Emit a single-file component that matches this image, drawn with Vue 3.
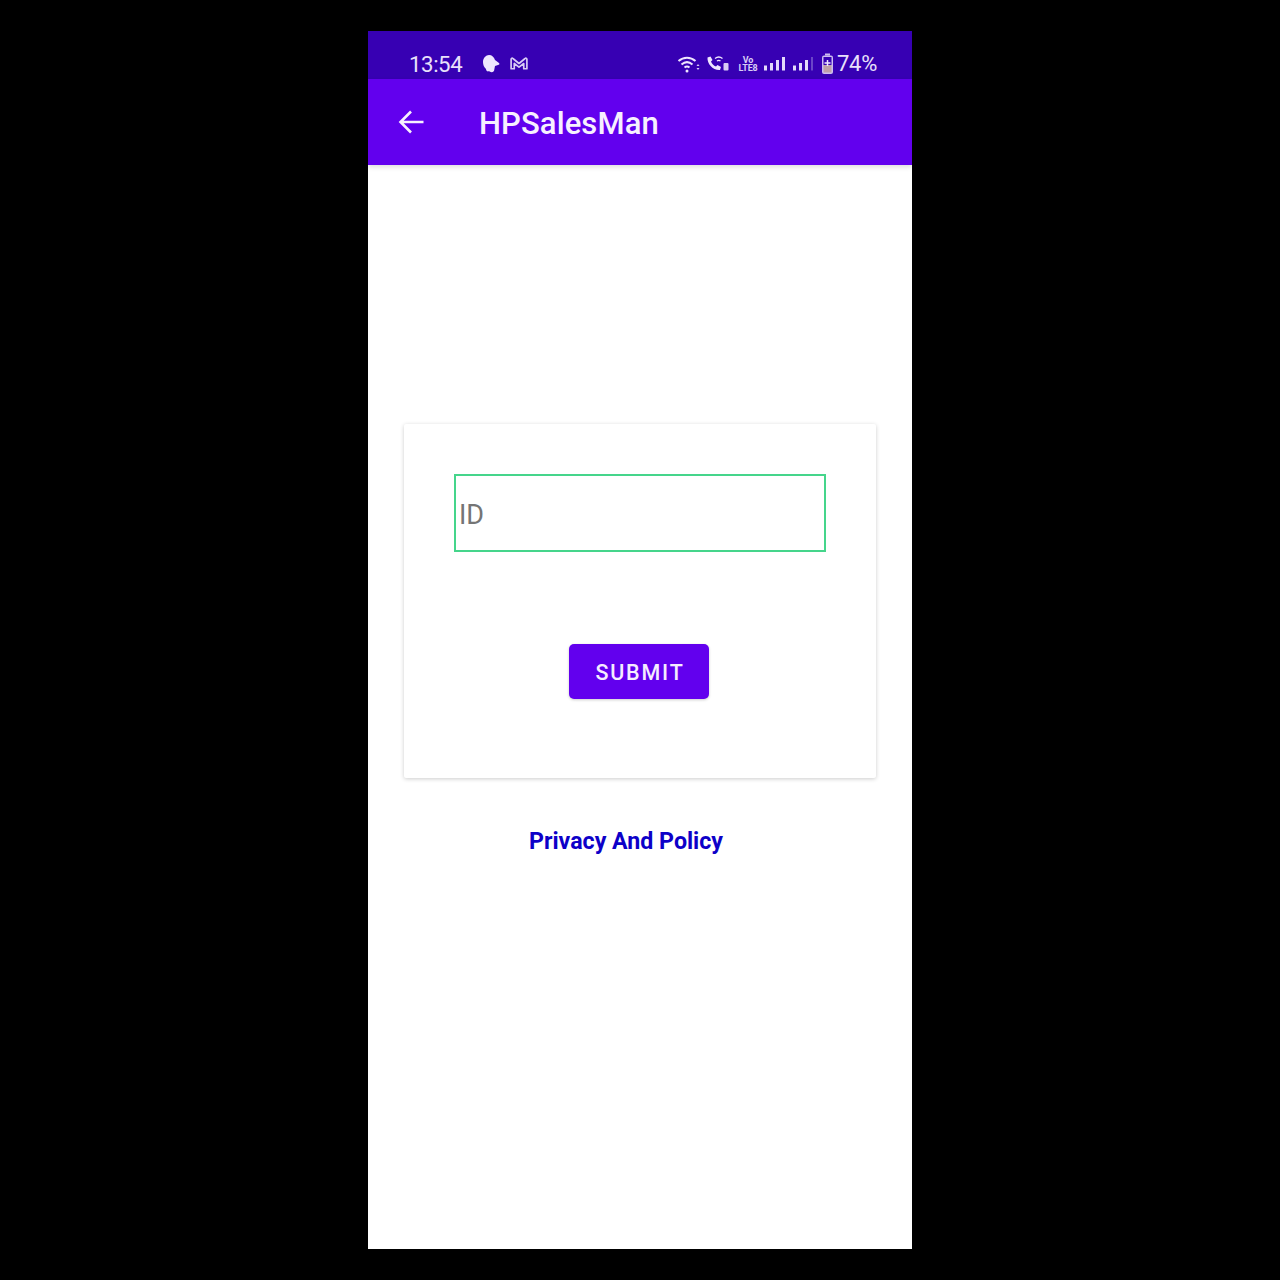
<script setup>
const title = 'HPSalesMan'
</script>

<template>
  <div class="page">
    <div class="phone">
      <div class="status">
        <span class="time">13:54</span>
        <svg class="bell" width="20" height="20" viewBox="0 0 20 20">
          <path d="M2 8c0-4 3-7 6-7 3 0 5 2 6 5l4 3c1 1 0 2-1 2l-3 1-1 5c-2 2-4 1-5 0-1 1-3 0-3-2C3 13 2 11 2 8z" fill="#efe6ff"/>
        </svg>
        <svg class="mail" width="20" height="15" viewBox="0 0 19 14">
          <path d="M2 12V3c0-1 1-1.500 2-.5L9.500 7 15 2.500c1-1 2-.5 2 .5v9h-3V7L9.500 10.500 5 7v5z" fill="none" stroke="#d9ccf5" stroke-width="1.600" stroke-linejoin="round"/>
        </svg>
        <span class="spacer"></span>
        <svg class="wifi" width="24" height="20" viewBox="0 0 24 20">
          <path d="M1.500 7C6.500 2.500 13.500 2.500 18.500 7M4.500 10.500c3.500-3 7.500-3 11 0M7.500 13.500c2-1.500 3-1.500 5 0" fill="none" stroke="#efe6ff" stroke-width="2"/>
          <circle cx="10" cy="17" r="1.500" fill="#efe6ff"/>
          <path d="M21 10l-1.500 2h3zM21 16l-1.500-2h3z" fill="#d9ccf5"/>
        </svg>
        <svg class="call" width="25" height="20" viewBox="0 0 25 20">
          <path d="M2.500 3.500L5.500 2.500 7.500 6 6 7.500C7 10 8.500 11.500 11 12.500L12.500 11 16 13 15 16C8 16.500 2 10 2.500 3.500z" fill="#efe6ff"/>
          <path d="M10 4.500c2.500-2 5-2 7.500 0M12 7c1.500-1 2-1 3.500 0" fill="none" stroke="#efe6ff" stroke-width="1.300"/>
          <rect x="18.500" y="9" width="5" height="7.500" rx="1" fill="#d9ccf5"/>
        </svg>
        <span class="volte"><span>Vo</span><span class="lte">LTE8</span></span>
        <svg class="signal" width="24" height="16" viewBox="0 0 24 16">
          <rect x="1" y="9.500" width="3" height="5" fill="#e4dafa"/>
          <rect x="7" y="7" width="3" height="7.500" fill="#e4dafa"/>
          <rect x="13" y="4" width="3" height="10.500" fill="#e4dafa"/>
          <rect x="19" y="1" width="3" height="13.500" fill="#e4dafa"/>
        </svg>
        <svg class="signal second" width="22" height="16" viewBox="0 0 22 16">
          <rect x="1" y="9.500" width="3" height="5" fill="#e4dafa"/>
          <rect x="7" y="7" width="3" height="7.500" fill="#e4dafa"/>
          <rect x="13" y="4" width="3" height="10.500" fill="#e4dafa"/>
          <rect x="19" y="1" width="2" height="13.500" fill="#6a45c8"/>
        </svg>
        <svg class="battery" width="13" height="22" viewBox="0 0 13 22">
          <rect x="4" y="0.500" width="5" height="2" fill="#cdbdf0"/>
          <rect x="1" y="2.500" width="11" height="18.500" rx="2" fill="#cdbdf0"/>
          <rect x="2.500" y="4" width="8" height="8" fill="#3700b3"/>
          <rect x="2.500" y="12" width="8" height="7.500" fill="#bfa0a8"/>
          <path d="M6.500 7v6M3.500 10h6" stroke="#efe6ff" stroke-width="1.500"/>
        </svg>
        <span class="percent">74%</span>
      </div>

      <header class="toolbar">
        <svg class="back" width="28" height="28" viewBox="0 0 28 28">
          <path d="M26.500 14H4M14 3.500L3.500 14 14 24.500" fill="none" stroke="#f7f0ff" stroke-width="2.600"/>
        </svg>
        <h1 class="title">{{ title }}</h1>
      </header>

      <main class="content">
        <section class="card">
          <div class="field"><span class="label">ID</span></div>
          <button class="submit" type="button">SUBMIT</button>
        </section>
        <a class="policy">Privacy And Policy</a>
      </main>
    </div>
  </div>
</template>

<style>
html, body {
  margin: 0;
  background: #000;
}
</style>

<style scoped>
.page {
  height: 1280px;
  background: #000;
  padding-top: 31px;
  box-sizing: border-box;
  font-family: Roboto, "Liberation Sans", sans-serif;
}
.phone {
  width: 544px;
  height: 1218px;
  margin: 0 auto;
  background: #fff;
  display: flex;
  flex-direction: column;
}
.status {
  height: 48px;
  flex: none;
  box-sizing: border-box;
  padding: 17px 35px 0 41px;
  background: #3700b3;
  display: flex;
  align-items: center;
  color: #e9e0fb;
}
.time {
  font-size: 22.200px;
  letter-spacing: -0.4px;
}
.bell { margin-left: 19px; }
.mail { margin-left: 8px; }
.spacer { flex: 1; }
.call { margin-left: 4px; }
.volte {
  margin-left: 8px;
  display: flex;
  flex-direction: column;
  align-items: center;
  font-size: 9px;
  line-height: 8px;
  font-weight: 700;
  color: #d9ccf5;
  width: 20px;
}
.lte {
  font-size: 9px;
  letter-spacing: -0.2px;
}
.signal { margin-left: 5px; }
.signal.second { margin-left: 5px; }
.battery { margin-left: 7px; }
.percent {
  margin-left: 3px;
  font-size: 22px;
  letter-spacing: -0.3px;
}
.toolbar {
  height: 86px;
  flex: none;
  background: #6200ee;
  display: flex;
  align-items: center;
  box-sizing: border-box;
  padding: 3px 0 0 29px;
  box-shadow: 0 2px 5px rgba(0, 0, 0, 0.14);
  position: relative;
}
.back { margin-top: -4px; }
.title {
  margin: 0 0 0 54px;
  font-size: 31px;
  line-height: 36px;
  font-weight: 500;
  letter-spacing: 0.1px;
  color: #f7f0ff;
}
.content {
  flex: 1;
  padding: 259px 36px 0;
  display: flex;
  flex-direction: column;
}
.card {
  height: 354px;
  box-sizing: border-box;
  padding: 50px 50px 0;
  border-radius: 2px;
  box-shadow: 0 1px 4px rgba(0, 0, 0, 0.2);
  display: flex;
  flex-direction: column;
  align-items: center;
}
.field {
  width: 100%;
  height: 78px;
  box-sizing: border-box;
  border: 2px solid #45d58b;
  padding: 3px 0 0 3px;
  display: flex;
  align-items: center;
  font-size: 27px;
  color: #757575;
}
.label { display: block; }
.submit {
  width: 140px;
  height: 55px;
  margin-top: 92px;
  margin-left: -2px;
  padding: 2px 0 0 2px;
  border: 0;
  border-radius: 5px;
  background: #6200ee;
  color: #f5ecff;
  font-family: inherit;
  font-size: 21.500px;
  font-weight: 500;
  letter-spacing: 1.800px;
  box-shadow: 0 1px 3px rgba(0, 0, 0, 0.2);
}
.policy {
  align-self: flex-start;
  margin: 48px 0 0 125px;
  font-size: 23.200px;
  line-height: 30px;
  font-weight: 700;
  color: #0d00c8;
}
</style>
